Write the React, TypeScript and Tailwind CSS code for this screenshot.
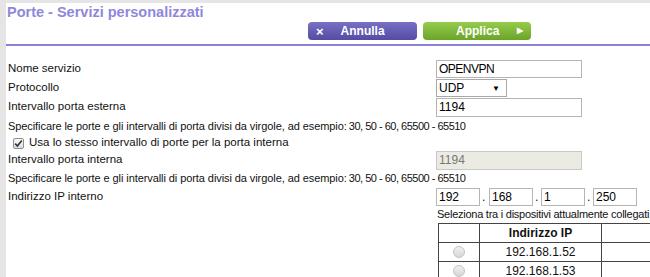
import React from "react";

const font = { fontFamily: '"Liberation Sans", Arial, sans-serif' };

function Row({ label, children, h }: { label?: React.ReactNode; children?: React.ReactNode; h: string }) {
  return (
    <div className={`flex items-center ${h}`}>
      <div className="w-[430px] shrink-0 pl-[2px] text-[11.5px] text-[#111]">{label}</div>
      <div className="flex items-center">{children}</div>
    </div>
  );
}

function Radio() {
  return (
    <span className="inline-block h-[12px] w-[12px] rounded-full border border-[#c4c4c4] bg-gradient-to-b from-[#f2f2f2] to-[#d6d6d6]" />
  );
}

function Hint() {
  return (
    <div className="flex h-[18px] items-center whitespace-nowrap pl-[2px] text-[11px] tracking-[-0.08px] text-[#111]">
      Specificare le porte e gli intervalli di porta divisi da virgole, ad esempio
      <span className="tracking-[-0.5px]">: 30, 50 - 60, 65500 - 65510</span>
    </div>
  );
}

export default function App() {
  const ips = ["192", "168", "1", "250"];
  const gaps = ["", "w-[9px]", "w-[8px]", "w-[8px]"];
  return (
    <div className="h-[277px] w-[650px] overflow-hidden bg-[#e5e5e5] pl-[6px] pt-[3px]" style={font}>
      <div className="h-full bg-white">
        <div className="h-[18px] pl-[1px] text-[14.5px] font-bold leading-[18px] text-[#8f87da]">
          Porte - Servizi personalizzati
        </div>
        <div className="mt-[1px] flex h-[18px] gap-[6px] pl-[302px]">
          <div className="flex w-[109px] items-center rounded-[4px] bg-gradient-to-b from-[#7770c4] to-[#554ba3] text-[12px] font-bold text-white">
            <span className="pl-[8px] text-[13px] leading-none">×</span>
            <span className="pl-[17px]">Annulla</span>
          </div>
          <div className="relative flex w-[108px] items-center rounded-[4px] bg-gradient-to-b from-[#97cc4c] to-[#6aa428] text-[12px] font-bold text-white">
            <span className="pl-[33px]">Applica</span>
            <span className="absolute right-[8px] top-[4px] text-[8px] leading-[10px]">▶</span>
          </div>
        </div>
        <div className="mt-[4px] h-[2px] bg-[#8b80d6]" />

        <div className="pt-[13px]">
          <Row label="Nome servizio" h="h-[19px]">
            <div className="flex h-[18px] w-[146px] items-center border border-[#b5b5b5] pl-[2px] text-[12px] tracking-[-0.5px] text-black">
              OPENVPN
            </div>
          </Row>
          <Row label="Protocollo" h="h-[19px]">
            <div className="relative flex h-[18px] w-[71px] items-center border border-[#a9a9a9] pl-[2px] text-[12px] text-black">
              UDP
              <span className="absolute right-[6px] top-[4px] text-[8px] leading-[9px]">▼</span>
            </div>
          </Row>
          <Row label="Intervallo porta esterna" h="h-[20px]">
            <div className="flex h-[19px] w-[146px] items-center border border-[#b5b5b5] pl-[2px] text-[12px] text-black">
              1194
            </div>
          </Row>
          <Hint />
          <div className="flex h-[16px] items-center pl-[7px] text-[11.5px] text-[#111]">
            <span className="mr-[5px] flex h-[11px] w-[11px] items-center justify-center rounded-[2px] border border-[#8f8f8f] bg-gradient-to-b from-[#fcfcfc] to-[#dcdcdc]">
              <svg width="9" height="9" viewBox="0 0 9 9">
                <path d="M1.2 4.6 L3.4 7 L7.8 1.6" fill="none" stroke="#333" strokeWidth="1.6" />
              </svg>
            </span>
            Usa lo stesso intervallo di porte per la porta interna
          </div>
          <Row label="Intervallo porta interna" h="h-[18px]">
            <div className="flex h-[19px] w-[146px] items-center border border-[#c8c8c8] bg-[#ebebe4] pl-[2px] text-[12px] text-[#777]">
              1194
            </div>
          </Row>
          <Hint />
          <Row label="Indirizzo IP interno" h="h-[19px]">
            {ips.map((v, i) => (
              <React.Fragment key={v}>
                {i > 0 && (
                  <span className={`${gaps[i]} pl-[2px] text-[12px] leading-[24px] text-[#111]`}>.</span>
                )}
                <div className="flex h-[18px] w-[44px] items-center border border-[#b5b5b5] pl-[2px] text-[12px] text-black">
                  {v}
                </div>
              </React.Fragment>
            ))}
          </Row>
          <div className="flex h-[17px] items-center whitespace-nowrap pl-[431px] text-[11px] tracking-[-0.25px] text-[#111]">
            Seleziona tra i dispositivi attualmente collegati
          </div>
          <div className="pl-[432px]">
            <table className="w-[260px] border-collapse text-[12px] text-[#111]">
              <tbody>
                <tr className="h-[18px]">
                  <td className="w-[41px] border border-[#444] p-0" />
                  <td className="w-[122px] border border-[#444] p-0 text-center font-bold">Indirizzo IP</td>
                  <td className="border border-[#444] p-0" />
                </tr>
                <tr className="h-[18px]">
                  <td className="border border-[#444] p-0 text-center leading-[0]">
                    <Radio />
                  </td>
                  <td className="border border-[#444] p-0 text-center">192.168.1.52</td>
                  <td className="border border-[#444] p-0" />
                </tr>
                <tr className="h-[18px]">
                  <td className="border border-[#444] p-0 text-center leading-[0]">
                    <Radio />
                  </td>
                  <td className="border border-[#444] p-0 text-center">192.168.1.53</td>
                  <td className="border border-[#444] p-0" />
                </tr>
              </tbody>
            </table>
          </div>
        </div>
      </div>
    </div>
  );
}
